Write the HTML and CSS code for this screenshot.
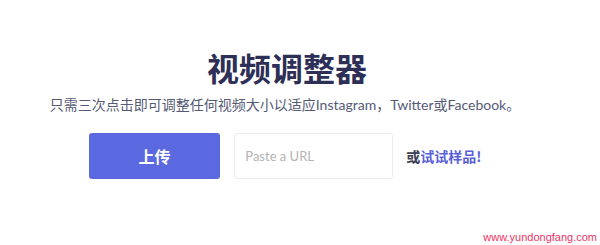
FILE: index.html
```html
<!DOCTYPE html>
<html lang="zh-CN">
<head>
<meta charset="utf-8">
<title>视频调整器</title>
<link rel="stylesheet" href="styles.css">
</head>
<body>
<main class="page">
  <h1 class="title">视频调整器</h1>
  <p class="subtitle">只需三次点击即可调整任何视频大小以适应Instagram，Twitter或Facebook。</p>
  <div class="actions">
    <button class="upload" type="button">上传</button>
    <input class="url" type="text" placeholder="Paste a URL">
    <span class="sample">或<a class="sample-link" href="#">试试样品!</a></span>
  </div>
</main>
<div class="watermark">www.yundongfang.com</div>
</body>
</html>
```

FILE: styles.css
```css
html, body {
  margin: 0;
  padding: 0;
  background: #ffffff;
}

body {
  width: 600px;
  height: 245px;
  overflow: hidden;
  position: relative;
  font-family: "Lato", "Noto Sans CJK SC", sans-serif;
}

.page {
  width: 570px;
  padding-top: 47px;
  display: flex;
  flex-direction: column;
  align-items: center;
}

.title {
  margin: 0;
  padding-left: 4px;
  font-family: "Noto Sans CJK SC", sans-serif;
  font-weight: 700;
  font-size: 32px;
  line-height: 40px;
  color: #2d2f56;
}

.subtitle {
  margin: 8px 0 0 0;
  font-family: "Lato", "Noto Sans CJK SC", sans-serif;
  font-size: 14px;
  line-height: 20px;
  color: #555a75;
  white-space: nowrap;
}

.actions {
  margin-top: 18px;
  display: flex;
  align-items: center;
  width: 393px;
}

.upload {
  width: 136px;
  height: 46px;
  border: none;
  border-radius: 3px;
  background: #5a69e0;
  color: #ffffff;
  font-family: "Noto Sans CJK SC", sans-serif;
  font-weight: 700;
  font-size: 16px;
  padding: 0;
}

.url {
  box-sizing: border-box;
  width: 159px;
  height: 46px;
  margin-left: 14px;
  border: 1px solid #ebebeb;
  border-radius: 3px;
  padding: 0 10px;
  font-family: "Lato", sans-serif;
  font-size: 13px;
  color: #444;
  outline: none;
}

.url::placeholder {
  color: #b3b3b3;
}

.sample {
  margin-left: 13px;
  font-family: "Noto Sans CJK SC", sans-serif;
  font-weight: 700;
  font-size: 14px;
  color: #3a3d52;
  white-space: nowrap;
}

.sample-link {
  color: #5a5fd8;
  text-decoration: none;
}

.watermark {
  position: absolute;
  right: 3px;
  bottom: 1px;
  font-family: "Liberation Sans", sans-serif;
  font-size: 11px;
  line-height: 14px;
  color: #ee3366;
}
```
